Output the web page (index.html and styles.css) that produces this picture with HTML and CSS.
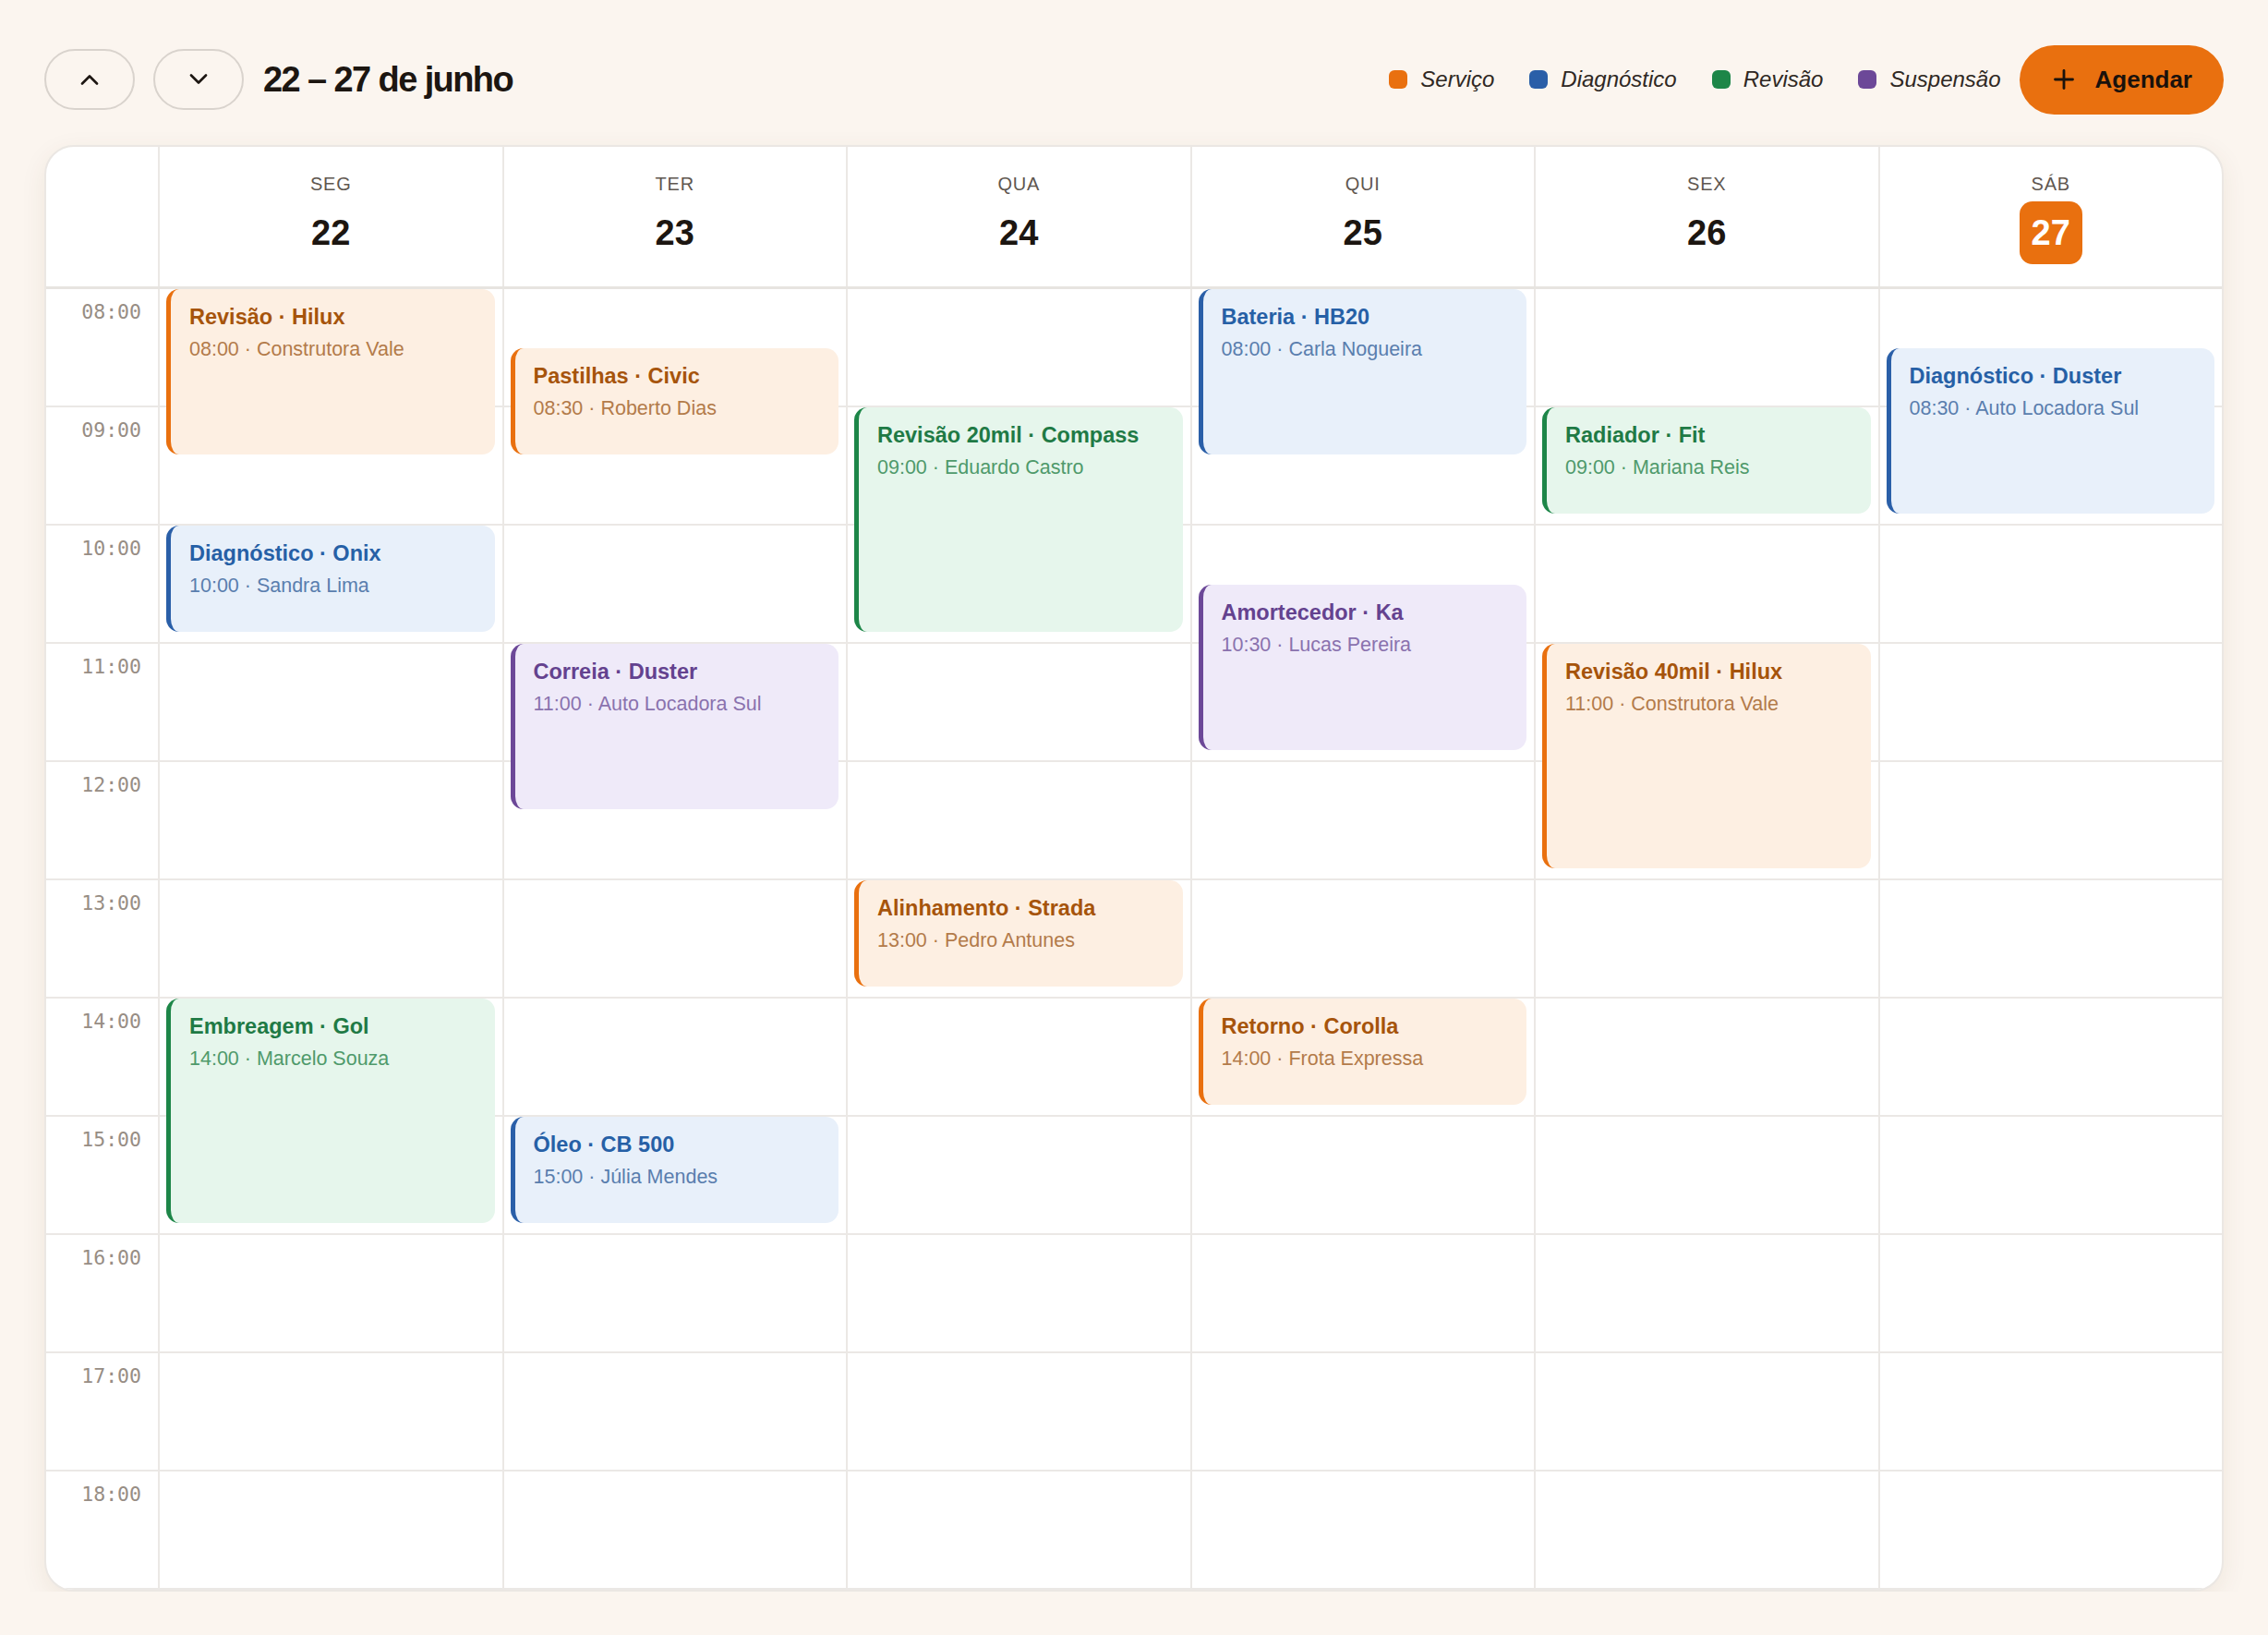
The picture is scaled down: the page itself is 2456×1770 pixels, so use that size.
FILE: index.html
```html
<!doctype html>
<html lang="pt-BR">
	<head>
		<meta charset="utf-8" />
		<meta name="viewport" content="width=device-width, initial-scale=1" />
		<title>Agenda da oficina</title>
		<link rel="stylesheet" href="styles.css">
	</head>
	<body>
		<main class="page">
			<header class="toolbar">
				<div class="toolbar-left">
					<button class="nav-btn" type="button" aria-label="Semana anterior">
						<svg width="20" height="12" viewBox="0 0 20 12" fill="none" stroke="currentColor" stroke-width="2.6" stroke-linecap="round" stroke-linejoin="round"><polyline points="2,10.5 10,2.5 18,10.5" /></svg>
					</button>
					<button class="nav-btn" type="button" aria-label="Próxima semana">
						<svg width="20" height="12" viewBox="0 0 20 12" fill="none" stroke="currentColor" stroke-width="2.6" stroke-linecap="round" stroke-linejoin="round"><polyline points="2,1.5 10,9.5 18,1.5" /></svg>
					</button>
					<h1 class="range">22 – 27 de junho</h1>
				</div>
				<div class="toolbar-right">
					<ul class="legend">
						<li><span class="swatch is-service"></span>Serviço</li>
						<li><span class="swatch is-diag"></span>Diagnóstico</li>
						<li><span class="swatch is-review"></span>Revisão</li>
						<li><span class="swatch is-susp"></span>Suspensão</li>
					</ul>
					<button class="add-btn" type="button">
						<svg width="22" height="22" viewBox="0 0 22 22" stroke="currentColor" stroke-width="2.8" stroke-linecap="round"><line x1="11" y1="1.5" x2="11" y2="20.5" /><line x1="1.5" y1="11" x2="20.5" y2="11" /></svg>
						Agendar
					</button>
				</div>
			</header>

			<section class="calendar">
				<div class="cal-head">
					<div class="corner"></div>
					<div class="day-head"><span class="day-name">SEG</span><span class="day-num">22</span></div>
					<div class="day-head"><span class="day-name">TER</span><span class="day-num">23</span></div>
					<div class="day-head"><span class="day-name">QUA</span><span class="day-num">24</span></div>
					<div class="day-head"><span class="day-name">QUI</span><span class="day-num">25</span></div>
					<div class="day-head"><span class="day-name">SEX</span><span class="day-num">26</span></div>
					<div class="day-head"><span class="day-name">SÁB</span><span class="day-num today">27</span></div>
				</div>

				<div class="cal-body">
					<div class="hours">
						<div class="hour">08:00</div>
						<div class="hour">09:00</div>
						<div class="hour">10:00</div>
						<div class="hour">11:00</div>
						<div class="hour">12:00</div>
						<div class="hour">13:00</div>
						<div class="hour">14:00</div>
						<div class="hour">15:00</div>
						<div class="hour">16:00</div>
						<div class="hour">17:00</div>
						<div class="hour">18:00</div>
					</div>

					<!-- --at: hours after 08:00, --len: duration in hours -->
					<div class="day-col">
						<article class="event is-service" style="--at: 0; --len: 1.5">
							<h3 class="event-title">Revisão · Hilux</h3>
							<p class="event-meta">08:00 · Construtora Vale</p>
						</article>
						<article class="event is-diag" style="--at: 2; --len: 1">
							<h3 class="event-title">Diagnóstico · Onix</h3>
							<p class="event-meta">10:00 · Sandra Lima</p>
						</article>
						<article class="event is-review" style="--at: 6; --len: 2">
							<h3 class="event-title">Embreagem · Gol</h3>
							<p class="event-meta">14:00 · Marcelo Souza</p>
						</article>
					</div>

					<div class="day-col">
						<article class="event is-service" style="--at: 0.5; --len: 1">
							<h3 class="event-title">Pastilhas · Civic</h3>
							<p class="event-meta">08:30 · Roberto Dias</p>
						</article>
						<article class="event is-susp" style="--at: 3; --len: 1.5">
							<h3 class="event-title">Correia · Duster</h3>
							<p class="event-meta">11:00 · Auto Locadora Sul</p>
						</article>
						<article class="event is-diag" style="--at: 7; --len: 1">
							<h3 class="event-title">Óleo · CB 500</h3>
							<p class="event-meta">15:00 · Júlia Mendes</p>
						</article>
					</div>

					<div class="day-col">
						<article class="event is-review" style="--at: 1; --len: 2">
							<h3 class="event-title">Revisão 20mil · Compass</h3>
							<p class="event-meta">09:00 · Eduardo Castro</p>
						</article>
						<article class="event is-service" style="--at: 5; --len: 1">
							<h3 class="event-title">Alinhamento · Strada</h3>
							<p class="event-meta">13:00 · Pedro Antunes</p>
						</article>
					</div>

					<div class="day-col">
						<article class="event is-diag" style="--at: 0; --len: 1.5">
							<h3 class="event-title">Bateria · HB20</h3>
							<p class="event-meta">08:00 · Carla Nogueira</p>
						</article>
						<article class="event is-susp" style="--at: 2.5; --len: 1.5">
							<h3 class="event-title">Amortecedor · Ka</h3>
							<p class="event-meta">10:30 · Lucas Pereira</p>
						</article>
						<article class="event is-service" style="--at: 6; --len: 1">
							<h3 class="event-title">Retorno · Corolla</h3>
							<p class="event-meta">14:00 · Frota Expressa</p>
						</article>
					</div>

					<div class="day-col">
						<article class="event is-review" style="--at: 1; --len: 1">
							<h3 class="event-title">Radiador · Fit</h3>
							<p class="event-meta">09:00 · Mariana Reis</p>
						</article>
						<article class="event is-service" style="--at: 3; --len: 2">
							<h3 class="event-title">Revisão 40mil · Hilux</h3>
							<p class="event-meta">11:00 · Construtora Vale</p>
						</article>
					</div>

					<div class="day-col">
						<article class="event is-diag" style="--at: 0.5; --len: 1.5">
							<h3 class="event-title">Diagnóstico · Duster</h3>
							<p class="event-meta">08:30 · Auto Locadora Sul</p>
						</article>
					</div>
				</div>
			</section>
		</main>
	</body>
</html>
```

FILE: styles.css
```css
/* Page */
body {
	background-color: #fbf5ef;
	color: #1c1611;
	font-family: "Liberation Sans", Arial, sans-serif;
	margin: 0;
}

.page {
	padding: 48px 48px 0;
}

/* Toolbar */
.toolbar {
	align-items: center;
	display: flex;
	height: 76px;
	justify-content: space-between;
	margin-bottom: 33px;
}

.toolbar-left,
.toolbar-right {
	align-items: center;
	display: flex;
	gap: 20px;
}

.nav-btn {
	align-items: center;
	background: transparent;
	border: 2px solid #d9d3cd;
	border-radius: 33px;
	color: #1c1611;
	display: flex;
	height: 66px;
	justify-content: center;
	padding: 0;
	width: 98px;
}

.range {
	font-size: 38px;
	font-weight: 700;
	letter-spacing: -1.6px;
	margin: 0 0 0 1px;
}

.legend {
	display: flex;
	gap: 38px;
	list-style: none;
	margin: 0;
	padding: 0;
}

.legend li {
	align-items: center;
	color: #2f2823;
	display: flex;
	font-size: 24px;
	font-style: italic;
	gap: 14px;
}

.swatch {
	border-radius: 6px;
	height: 20px;
	width: 20px;
}

.swatch.is-service { background-color: #e9700f; }
.swatch.is-diag { background-color: #2a5fa8; }
.swatch.is-review { background-color: #1d8648; }
.swatch.is-susp { background-color: #6c4898; }

.add-btn {
	align-items: center;
	background-color: #e9700f;
	border: none;
	border-radius: 38px;
	color: #1a120c;
	display: flex;
	font-family: inherit;
	font-size: 26px;
	font-weight: 700;
	gap: 23px;
	height: 75px;
	padding: 0 34px 0 37px;
}

/* Week grid */
.calendar {
	background-color: #fff;
	border: 2px solid #ebe7e3;
	border-radius: 32px;
	box-shadow: 0 8px 28px rgba(90, 60, 30, 0.08);
	overflow: hidden;
}

.cal-head,
.cal-body {
	display: grid;
	grid-template-columns: 121px repeat(6, 1fr);
}

.cal-head {
	border-bottom: 3px solid #e7e4e0;
}

.day-head {
	align-items: center;
	border-left: 2px solid #ebe8e5;
	display: flex;
	flex-direction: column;
	padding: 28px 0 24px;
}

.day-name {
	color: #5f5750;
	font-size: 20px;
	letter-spacing: 0.8px;
	line-height: 24px;
}

.day-num {
	align-items: center;
	border-radius: 14px;
	display: flex;
	font-size: 38px;
	font-weight: 700;
	height: 68px;
	justify-content: center;
	margin-top: 7px;
	width: 68px;
}

.day-num.today {
	background-color: #e9700f;
	color: #fff;
}

.cal-body {
	background-image: repeating-linear-gradient(
		to bottom,
		transparent 0 126px,
		#ebe8e5 126px 128px
	);
}

.hour {
	box-sizing: border-box;
	color: #978d84;
	font-family: "DejaVu Sans Mono", monospace;
	font-size: 21.5px;
	height: 128px;
	line-height: 26px;
	padding: 12px 18px 0 0;
	text-align: right;
}

.day-col {
	border-left: 2px solid #ebe8e5;
	height: calc(11 * 128px);
	position: relative;
}

/* Appointments */
.event {
	border-left: 5px solid;
	border-radius: 14px;
	box-sizing: border-box;
	height: calc(var(--len) * 128px - 13px);
	left: 7px;
	overflow: hidden;
	padding: 16px 12px 0 20px;
	position: absolute;
	right: 8px;
	top: calc(var(--at) * 128px);
}

.event-title {
	font-size: 23.5px;
	font-weight: 700;
	line-height: 28px;
	margin: 0;
	white-space: nowrap;
}

.event-meta {
	font-size: 21.5px;
	line-height: 28px;
	margin: 7px 0 0;
	white-space: nowrap;
}

.event.is-service {
	background-color: #fdefe2;
	border-color: #e9700f;
}
.event.is-service .event-title { color: #a6540b; }
.event.is-service .event-meta { color: #b37b4a; }

.event.is-diag {
	background-color: #e8f0fa;
	border-color: #2a5fa8;
}
.event.is-diag .event-title { color: #2660a6; }
.event.is-diag .event-meta { color: #5a7eae; }

.event.is-review {
	background-color: #e6f6ec;
	border-color: #1d8648;
}
.event.is-review .event-title { color: #1f7a45; }
.event.is-review .event-meta { color: #4f9a6b; }

.event.is-susp {
	background-color: #efeaf9;
	border-color: #6c4898;
}
.event.is-susp .event-title { color: #64428f; }
.event.is-susp .event-meta { color: #8a72ae; }
```
